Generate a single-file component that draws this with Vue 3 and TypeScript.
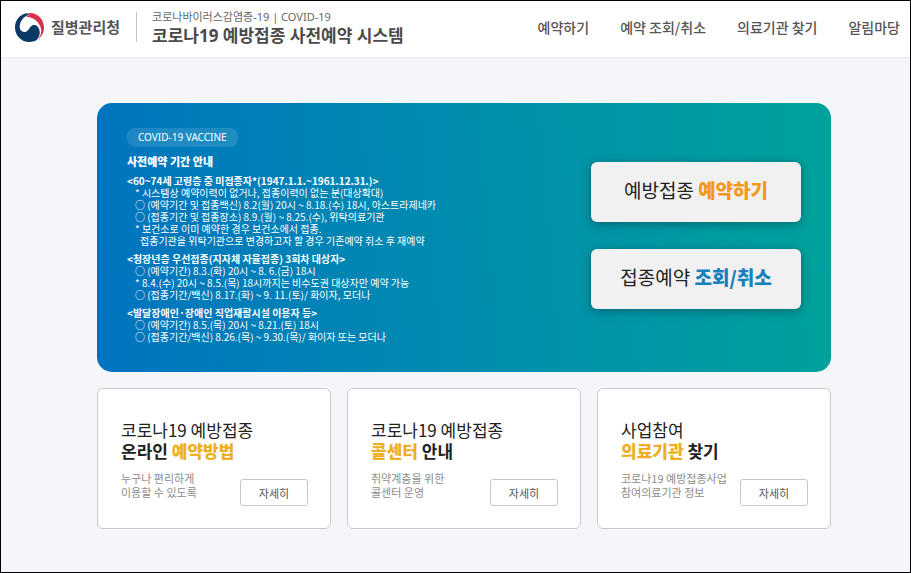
<script setup lang="ts">
interface Notice {
  heading: string
  lines: { text: string; deep?: boolean }[]
}

interface Part {
  text: string
  accent?: boolean
}

interface Card {
  first: string
  second: Part[]
  desc: string[]
}

const menu: string[] = ['예약하기', '예약 조회/취소', '의료기관 찾기', '알림마당']

const notices: Notice[] = [
  {
    heading: '<60~74세 고령층 중 미접종자*(1947.1.1.~1961.12.31.)>',
    lines: [
      { text: '* 시스템상 예약이력이 없거나, 접종이력이 없는 분(대상확대)' },
      { text: '○ (예약기간 및 접종백신) 8.2(월) 20시 ~ 8.18.(수) 18시, 아스트라제네카' },
      { text: '○ (접종기간 및 접종장소) 8.9.(월) ~ 8.25.(수), 위탁의료기관' },
      { text: '* 보건소로 이미 예약한 경우 보건소에서 접종.' },
      { text: '접종기관을 위탁기관으로 변경하고자 할 경우 기존예약 취소 후 재예약', deep: true },
    ],
  },
  {
    heading: '<청장년층 우선접종(지자체 자율접종) 3회차 대상자>',
    lines: [
      { text: '○ (예약기간) 8.3.(화) 20시 ~ 8. 6.(금) 18시' },
      { text: '* 8.4.(수) 20시 ~ 8.5.(목) 18시까지는 비수도권 대상자만 예약 가능' },
      { text: '○ (접종기간/백신) 8.17.(화) ~ 9. 11.(토)/ 화이자, 모더나' },
    ],
  },
  {
    heading: '<발달장애인·장애인 직업재활시설 이용자 등>',
    lines: [
      { text: '○ (예약기간) 8.5.(목) 20시 ~ 8.21.(토) 18시' },
      { text: '○ (접종기간/백신) 8.26.(목) ~ 9.30.(목)/ 화이자 또는 모더나' },
    ],
  },
]

const cards: Card[] = [
  {
    first: '코로나19 예방접종',
    second: [{ text: '온라인 ' }, { text: '예약방법', accent: true }],
    desc: ['누구나 편리하게', '이용할 수 있도록'],
  },
  {
    first: '코로나19 예방접종',
    second: [{ text: '콜센터', accent: true }, { text: ' 안내' }],
    desc: ['취약계층을 위한', '콜센터 운영'],
  },
  {
    first: '사업참여',
    second: [{ text: '의료기관', accent: true }, { text: ' 찾기' }],
    desc: ['코로나19 예방접종사업', '참여의료기관 정보'],
  },
]
</script>

<template>
  <div class="page">
    <header class="header">
      <a class="agency" href="#">
        <svg class="emblem" viewBox="0 0 84 84" aria-hidden="true">
          <path
            fill="#0b3a66"
            d="M34 1 C14 4 0 21 0 42 C0 66 18 84 42 84 C50 84 57 82 62 79 C71 70 74 58 70 47 C66 35 54 31 46 39 C39 46 37 55 27 55 C17 55 12 46 14 35 C17 20 26 9 42 4 Z"
          />
          <path
            fill="#d9304c"
            d="M36 1 C62 -4 84 17 84 43 C84 58 77 69 67 76 C77 62 79 49 72 36 C65 22 51 12 32 11 C36 7 40 5 44 4 Z"
          />
        </svg>
        <span class="agency-name">질병관리청</span>
      </a>
      <span class="divider"></span>
      <div class="brand">
        <p class="brand-sub">코로나바이러스감염증-19 | COVID-19</p>
        <h1 class="brand-title">코로나19 예방접종 사전예약 시스템</h1>
      </div>
      <nav class="menu">
        <a v-for="item in menu" :key="item" href="#">{{ item }}</a>
      </nav>
    </header>

    <main class="content">
      <section class="hero">
        <div class="info">
          <span class="badge">COVID-19 VACCINE</span>
          <h2 class="info-title">사전예약 기간 안내</h2>
          <div v-for="n in notices" :key="n.heading" class="notice">
            <h3>{{ n.heading }}</h3>
            <p v-for="l in n.lines" :key="l.text" :class="{ deep: l.deep }">{{ l.text }}</p>
          </div>
        </div>
        <div class="actions">
          <button type="button">예방접종 <strong class="orange">예약하기</strong></button>
          <button type="button">접종예약 <strong class="blue">조회/취소</strong></button>
        </div>
      </section>

      <section class="cards">
        <article v-for="(c, i) in cards" :key="i" class="card">
          <h2>
            {{ c.first }}<br />
            <strong>
              <span v-for="p in c.second" :key="p.text" :class="{ accent: p.accent }">{{ p.text }}</span>
            </strong>
          </h2>
          <div class="card-foot">
            <p>{{ c.desc[0] }}<br />{{ c.desc[1] }}</p>
            <button type="button">자세히</button>
          </div>
        </article>
      </section>
    </main>
  </div>
</template>

<style>
body {
  background: #f4f6f9;
}
</style>

<style scoped>
.page {
  box-sizing: border-box;
  min-height: 100vh;
  border: 1px solid #000;
  background: #f4f6f9;
  color: #222;
  font-family: 'Noto Sans CJK KR', sans-serif;
}

h1,
h2,
h3,
p {
  margin: 0;
}

a {
  color: inherit;
  text-decoration: none;
}

button {
  font-family: inherit;
  cursor: pointer;
}

.header {
  display: flex;
  align-items: center;
  height: 56px;
  padding: 0 10px 0 14px;
  border-bottom: 1px solid #e6e8f0;
  background: #fff;
}

.agency {
  display: flex;
  align-items: center;
  gap: 7px;
  padding-bottom: 4px;
}

.emblem {
  width: 29px;
  height: 29px;
}

.agency-name {
  color: #55565a;
  font-size: 15px;
  font-weight: 700;
  line-height: 20px;
}

.divider {
  width: 1px;
  height: 30px;
  margin: 0 15px 4px 16px;
  background: #c4c4c4;
}

.brand {
  margin-right: auto;
  font-family: 'Noto Sans', 'Noto Sans CJK KR', sans-serif;
}

.brand-sub {
  color: #666;
  font-size: 11px;
  line-height: 14px;
}

.brand-title {
  color: #4a4a4a;
  font-size: 17px;
  font-weight: 700;
  line-height: 24px;
}

.menu {
  display: flex;
  gap: 31px;
  padding-bottom: 4px;
  color: #555;
  font-size: 14px;
  font-weight: 500;
  line-height: 20px;
  white-space: nowrap;
}

.content {
  display: grid;
  gap: 16px;
  padding: 45px 79px 42px 96px;
}

.hero {
  display: flex;
  justify-content: space-between;
  padding: 25px 30px 29px;
  border-radius: 15px;
  background: linear-gradient(85deg, #0073c0 0%, #0092ab 60%, #00a29b 100%);
}

.info {
  color: #fff;
  white-space: nowrap;
}

.badge {
  display: block;
  width: fit-content;
  padding: 0 11px;
  border-radius: 8px;
  background: rgba(255, 255, 255, 0.12);
  font-family: 'Noto Sans', sans-serif;
  font-size: 10px;
  line-height: 19px;
}

.info-title {
  margin: 8px 0;
  font-size: 11px;
  font-weight: 900;
  line-height: 12px;
}

.notice {
  font-size: 10px;
  line-height: 12px;
}

.notice + .notice {
  margin-top: 6px;
}

.notice h3 {
  font-size: 10px;
  font-weight: 700;
  line-height: 12px;
}

.notice p {
  padding-left: 8px;
}

.notice .deep {
  padding-left: 13px;
}

.actions {
  display: grid;
  align-content: center;
  gap: 27px;
  width: 210px;
}

.actions button {
  height: 60px;
  padding: 0 0 4px;
  border: 0;
  border-radius: 6px;
  background: #f1f1f1;
  box-shadow: 0 2px 10px rgba(0, 50, 60, 0.5);
  color: #222;
  font-size: 19px;
  line-height: 28px;
}

.actions strong {
  font-weight: 900;
}

.orange {
  color: #f3981b;
}

.blue {
  color: #1681bd;
}

.cards {
  display: grid;
  grid-template-columns: repeat(3, 1fr);
  gap: 16px;
}

.card {
  padding: 30px 22px 22px 23px;
  border: 1px solid #c8cacf;
  border-radius: 6px;
  background: #fff;
}

.card h2 {
  font-size: 17px;
  font-weight: 400;
  line-height: 21px;
}

.card strong {
  font-weight: 700;
}

.card .accent {
  color: #efae24;
  font-weight: 900;
}

.card-foot {
  display: flex;
  align-items: flex-end;
  justify-content: space-between;
  margin-top: 10px;
}

.card p {
  padding-bottom: 7px;
  color: #8c8c8c;
  font-size: 11px;
  line-height: 14px;
  white-space: nowrap;
}

.card button {
  width: 68px;
  height: 27px;
  padding: 0;
  border: 1px solid #c4c6ca;
  border-radius: 3px;
  background: #fff;
  color: #555;
  font-size: 11px;
  line-height: 16px;
}
</style>
